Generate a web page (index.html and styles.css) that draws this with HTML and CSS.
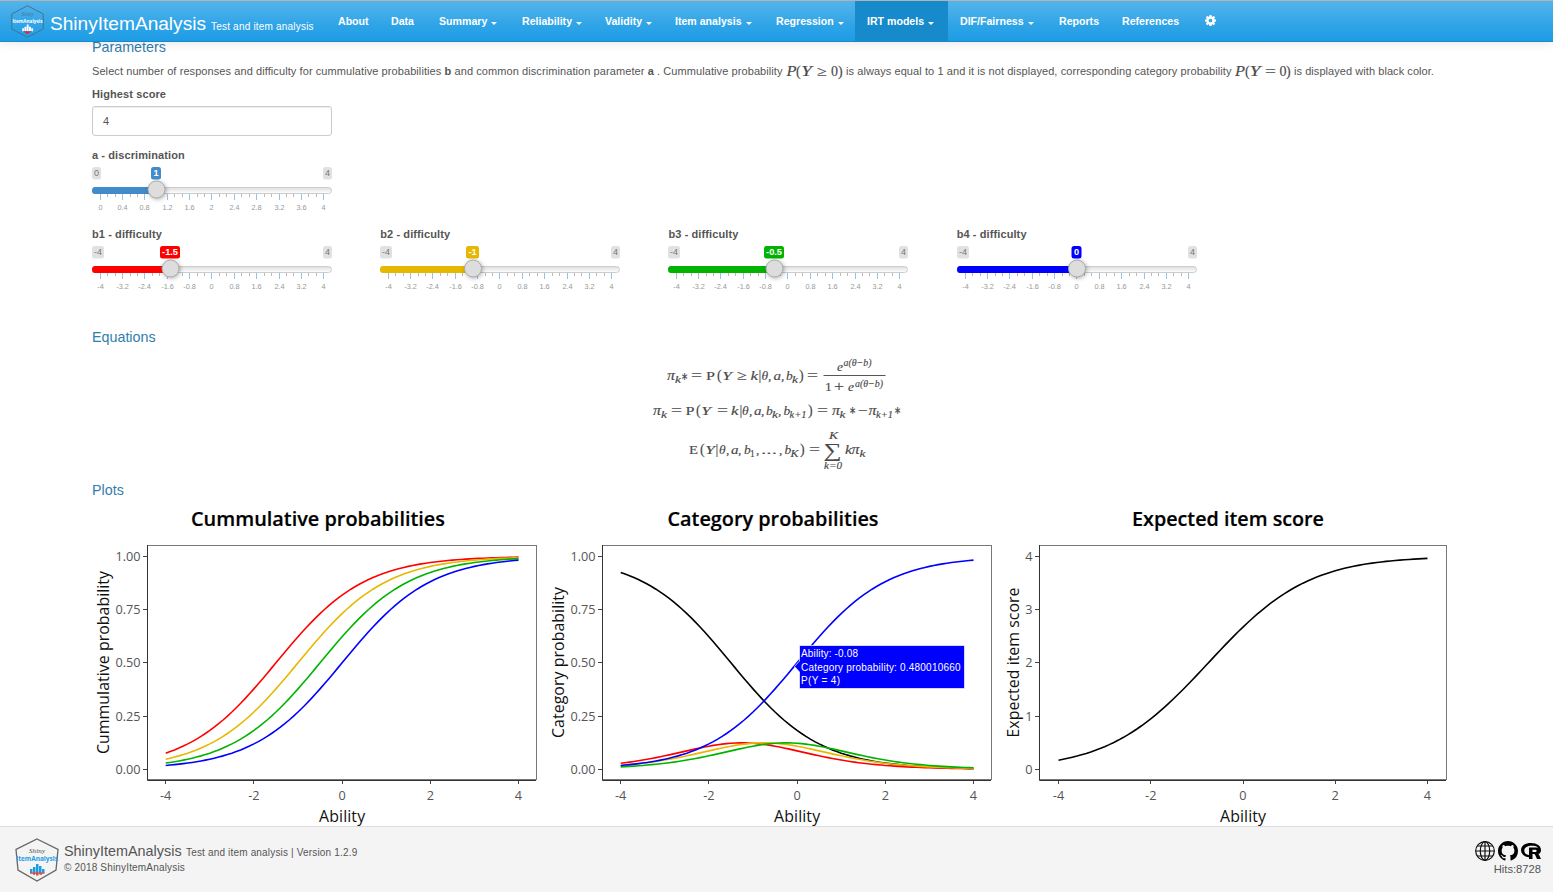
FILE: index.html
```html
<!DOCTYPE html>
<html lang="en">
<head>
<meta charset="utf-8">
<title>ShinyItemAnalysis</title>
<link rel="stylesheet" href="styles.css">
</head>
<body>
<header class="navbar">
  <svg class="nav-logo" viewBox="0 0 44 44"><path class="hex hex-dark" d="M22 1L43 12V32L22 43L1 32V12Z"/><text class="script white" x="14" y="15" textLength="16">Shiny</text><text class="brandword white" x="2" y="23.500" textLength="40" lengthAdjust="spacingAndGlyphs">ItemAnalysis</text><path fill="#fff" d="M15 31h2.500v4H15zM18 29h2.500v6H18zM21 26h2.500v9H21zM24 29h2.500v6H24zM27 31h2.500v4H27z"/><path fill="#c8334a" d="M16 35h12l-6 4z"/></svg>
  <div class="brand">ShinyItemAnalysis</div><div class="tagline">Test and item analysis</div>
  <nav class="menu">
    <a>About</a><a>Data</a><a class="drop">Summary</a><a class="drop">Reliability</a><a class="drop">Validity</a><a class="drop">Item analysis</a><a class="drop">Regression</a><a class="drop active">IRT models</a><a class="drop">DIF/Fairness</a><a>Reports</a><a>References</a>
    <a><svg class="gear" viewBox="0 0 16 16"><path fill="#fff" fill-rule="evenodd" d="M6.600 0h2.800l.4 2.200 1.200.5 1.800-1.300 2 2-1.300 1.800.5 1.200 2 .3v2.800l-2 .4-.5 1.200 1.300 1.800-2 2-1.800-1.300-1.200.5-.4 2H6.600l-.4-2-1.200-.5-1.800 1.300-2-2 1.300-1.800L2 9.900l-2-.4V6.700l2-.3.5-1.200L1.200 3.400l2-2L5 2.700l1.200-.5zM8 5.300a2.700 2.700 0 100 5.400 2.700 2.700 0 000-5.400z"/></svg></a>
  </nav>
</header>
<main class="content">
  <h4 class="h-params">Parameters</h4>
  <p class="intro"><span class="seg s1">Select number of responses and difficulty for cummulative probabilities <b>b</b> and common discrimination parameter <b>a</b> . Cummulative probability</span><svg class="imath m1" viewBox="786 61 60 18"><g data-math="i1"></g></svg><span class="seg s2">is always equal to 1 and it is not displayed, corresponding category probability</span><svg class="imath m2" viewBox="1235 61 59 18"><g data-math="i2"></g></svg><span class="seg s3">is displayed with black color.</span></p>
  <label class="label">Highest score</label>
  <div class="input">4</div>
  <section class="a-row"><div class="slider" data-label="a - discrimination" data-min="0" data-max="4" data-value="1" data-color="#428bca" data-pos="64.5"></div></section>
  <section class="b-row">
    <div class="slider" data-label="b1 - difficulty" data-min="-4" data-max="4" data-value="-1.5" data-color="#ff0000" data-pos="78.5"></div>
    <div class="slider" data-label="b2 - difficulty" data-min="-4" data-max="4" data-value="-1" data-color="#e6b800" data-pos="93"></div>
    <div class="slider" data-label="b3 - difficulty" data-min="-4" data-max="4" data-value="-0.5" data-color="#00b300" data-pos="106.5"></div>
    <div class="slider" data-label="b4 - difficulty" data-min="-4" data-max="4" data-value="0" data-color="#0000ff" data-pos="120"></div>
  </section>
  <h4 class="h-eq">Equations</h4>
  <svg class="equations" viewBox="640 350 280 130"><g data-math="display"></g><path class="rule" d="M823.500 375.500H885.500"/></svg>
  <h4 class="h-plots">Plots</h4>
  <section class="plots">
    <svg class="plot" id="cumulative" viewBox="92 503 455 323"></svg>
    <svg class="plot" id="category" viewBox="547 503 455 323"></svg>
    <svg class="plot" id="expected" viewBox="1002 503 455 323"></svg>
  </section>
</main>
<footer class="footer">
  <svg class="foot-logo" viewBox="0 0 44 44"><path class="hex" d="M22 1L43 11.500L41 32L22 43L3 32L1 11.500Z"/><text class="script" x="14" y="15" textLength="16">Shiny</text><text class="brandword" x="1" y="23" textLength="42" lengthAdjust="spacingAndGlyphs">ItemAnalysis</text><path fill="#1d9ce5" d="M15 31h2.500v4H15zM18 29h2.500v6H18zM21 26h2.500v9H21zM24 28h2.500v7H24zM27 31h2.500v4H27z"/><path fill="#e04a3a" d="M15 34.500h14.500v1.200H27v1h-2.500v-1h-1v1.800H21v-1.800h-1v1h-2v-1h-3z"/></svg>
  <div class="foot-text"><div><span class="foot-name">ShinyItemAnalysis</span><span class="foot-tag">Test and item analysis | Version 1.2.9</span></div><div class="copy">© 2018 ShinyItemAnalysis</div></div>
  <div class="foot-right">
    <div class="icons">
      <svg viewBox="0 0 20 20"><g fill="none" stroke="#111" stroke-width="1.200"><circle cx="10" cy="10" r="9.300"/><ellipse cx="10" cy="10" rx="4.700" ry="9.300"/><path d="M10 .7V19.300M.7 10H19.300M2.500 5H17.500M2.500 15H17.500"/></g></svg>
      <svg viewBox="0 0 16 16"><path d="M8 0C3.580 0 0 3.580 0 8c0 3.540 2.290 6.530 5.470 7.590.4.07.55-.17.55-.38 0-.19-.01-.82-.01-1.490-2.010.37-2.530-.49-2.690-.94-.09-.23-.48-.94-.82-1.130-.28-.15-.68-.52-.01-.53.63-.01 1.080.58 1.230.82.72 1.210 1.870.87 2.330.66.07-.52.28-.87.51-1.070-1.780-.2-3.640-.89-3.640-3.950 0-.87.31-1.590.82-2.150-.08-.2-.36-1.020.08-2.120 0 0 .67-.21 2.200.82.64-.18 1.320-.27 2-.27.68 0 1.360.09 2 .27 1.530-1.040 2.200-.82 2.200-.82.44 1.100.16 1.920.08 2.120.51.56.82 1.270.82 2.150 0 3.070-1.870 3.750-3.650 3.950.29.25.54.73.54 1.480 0 1.070-.01 1.930-.01 2.200 0 .21.15.46.55.38A8.013 8.013 0 0016 8c0-4.420-3.580-8-8-8z"/></svg>
      <svg viewBox="0 0 20 20"><path fill-rule="evenodd" d="M10 2C4 2 0 5 0 9s3.500 7 8 7.300V14C5 13.600 3.300 12 3.300 9.400 3.300 6.500 6.500 4.700 11 4.700s6.500 1.500 6.500 4c0 1.500-.5 2.500-1.500 3.300l2 1c1.300-1 2-2.300 2-4 0-4-4-7-10-7z"/><path fill-rule="evenodd" d="M8 6.500h7c2.500 0 4 1 4 3 0 1.500-.8 2.500-2.200 2.900 1 .4 1.500 1.600 3.200 5.600h-4l-1.800-4c-.3-.8-.8-1-1.600-1H11.500v5H8zM11.500 8.700v2.300h2.600c1 0 1.500-.4 1.500-1.200s-.5-1.100-1.500-1.100z"/></svg>
    </div>
    <div class="hits">Hits:8728</div>
  </div>
</footer>
<script src="app.js"></script>
</body>
</html>
```

FILE: styles.css
```css
* { box-sizing: border-box; }
body { margin: 0; height: 892px; overflow: hidden; background: #fff; color: #555; font-family: "Liberation Sans", Arial, sans-serif; font-size: 11px; display: flex; flex-direction: column; }
.navbar { height: 42px; flex: none; display: flex; align-items: flex-start; border-top: 1px solid #b3b3b3; border-bottom: 1px solid #178acc; background: linear-gradient(#54b4eb, #2fa4e7 60%, #1d9ce5); box-shadow: 0 1px 10px rgba(0,0,0,.1); color: #fff; z-index: 2; }
.nav-logo { width: 33px; height: 33px; margin: 4px 0 0 11px; flex: none; overflow: visible; }
.hex { fill: none; stroke: #666; stroke-width: 1.3; }
.hex-dark { stroke: #41738f; }
.script { font: italic 7px "Liberation Serif", serif; fill: #444; }
.brandword { font: bold 7px "Open Sans", sans-serif; fill: #1d9ce5; }
.white { fill: #fff; }
.script.white { fill: #41738f; }
.brand { margin-left: 6px; width: 161px; font-size: 19.1px; line-height: 45px; white-space: nowrap; }
.tagline { width: 115px; font-size: 10px; letter-spacing: .2px; line-height: 51px; white-space: nowrap; }
.menu { display: grid; grid-template-columns: 53px 48px 83px 83px 70px 101px 91px 93px 99px 63px 82px 36px; height: 40px; }
.menu a { padding-left: 12px; font-weight: bold; font-size: 10.6px; line-height: 40px; white-space: nowrap; }
.drop::after { content: ""; display: inline-block; margin-left: 4px; border: 3.5px solid transparent; border-top: 3px solid #fff; border-bottom: 0; }
.menu .active { background: #178acc; }
.gear { width: 11px; height: 11px; margin-left: 1px; vertical-align: -1px; }
.content { flex: 1; min-height: 0; padding-left: 92px; display: flex; flex-direction: column; align-items: flex-start; }
h4 { margin: 0; font-weight: normal; font-size: 14.3px; line-height: 16px; color: #317eac; flex: none; }
.h-params { margin-top: -3px; }
.intro { margin: 7px 0 0; height: 18px; line-height: 18px; display: flex; white-space: nowrap; flex: none; }
.s1 { width: 694px; letter-spacing: .084px; }
.s2 { width: 389px; letter-spacing: .08px; }
.s3 { width: 142px; letter-spacing: .06px; }
.imath { height: 18px; flex: none; }
.m1 { width: 60px; }
.m2 { width: 59px; }
.label { font-weight: bold; font-size: 11px; letter-spacing: .1px; line-height: 14px; margin-top: 7px; flex: none; }
.input { width: 240px; height: 30px; margin-top: 5px; padding-left: 10px; border: 1px solid #ccc; border-radius: 3px; line-height: 29px; box-shadow: inset 0 1px 1px rgba(0,0,0,.075); flex: none; }
.a-row { margin-top: 12px; height: 79px; flex: none; }
.b-row { display: flex; gap: 48.22px; height: 102px; flex: none; }
.slider { width: 240px; flex: none; }
.slider-label { font-weight: bold; letter-spacing: .1px; line-height: 14px; display: block; }
.slider svg { display: block; width: 240px; height: 52px; margin-top: 4px; overflow: visible; }
.tag { font-size: 9px; text-anchor: middle; fill: #777; }
.value { fill: #fff; font-weight: bold; font-size: 9.2px; }
.grid-text { font-size: 7.3px; text-anchor: middle; fill: #999; }
.handle { fill: #ddd; stroke: #aaa; filter: drop-shadow(1px 1px 2px rgba(0,0,0,.3)); }
.equations { width: 280px; height: 130px; margin: 5px 0 0 548px; flex: none; }
.math { font-family: "Liberation Serif", serif; fill: #4a4a4a; stroke: #4a4a4a; stroke-width: .15; }
.it { font-style: italic; }
.rule { stroke: #555; }
.h-plots { margin-top: 2px; }
.plots { display: flex; margin-top: 5px; height: 323px; flex: none; }
.plot { width: 455px; height: 323px; flex: none; font-family: "Open Sans", sans-serif; }
.title { font-size: 19px; font-weight: 600; fill: #000; stroke: #000; stroke-width: .2; }
.axis { font-size: 15.9px; fill: #111; text-anchor: middle; }
.tick { font-size: 12.7px; fill: #555; }
.curve { fill: none; stroke-width: 1.6; }
.tip { font: 10px "Liberation Sans", Arial, sans-serif; fill: #fff; }
.footer { height: 66px; flex: none; background: #f4f4f4; border-top: 1px solid #ddd; display: flex; padding: 0 12px 0 15px; z-index: 2; }
.foot-logo { width: 44px; height: 44px; margin-top: 11px; overflow: visible; }
.foot-text { margin: 16px 0 0 5px; line-height: 17px; white-space: nowrap; }
.foot-name { display: inline-block; width: 122px; font-size: 14.4px; }
.foot-tag, .copy { font-size: 10px; letter-spacing: .17px; }
.copy { line-height: 13px; }
.foot-right { margin: 14px 0 0 auto; text-align: right; }
.icons { display: flex; gap: 3px; height: 20px; }
.icons svg { width: 20px; height: 20px; }
.hits { font-size: 11.2px; line-height: 17px; }
```

FILE: app.js
```javascript
const NS = 'http://www.w3.org/2000/svg';
function add(parent, name, attrs, text) {
  const n = document.createElementNS(NS, name);
  for (const k in attrs) n.setAttribute(k, attrs[k]);
  if (text !== undefined) n.textContent = text;
  parent.appendChild(n);
  return n;
}

// Each entry: text, x, baseline, size, upright, optional width
const equations = {
  display: [
    ['π',667,379.5,14,0,8],['k',675,382.5,10.5,0,6],['∗',680.5,379.5,11,1,7],['=',691,379.5,14,1,11],['P',706,379.5,13.5,1,9],['(',717,379.5,14,1],['Y',722,379.5,13.5,0,10],['≥',737,379.5,14,1,10],['k',750.5,379.5,13.5,0,7.5],['|',758.5,379.5,14,1],['θ',761.5,379.5,13.5],[',',768,379.5,13.5,1],['a',773.5,379.5,13.5,0,7.5],[',',781,379.5,13.5,1],['b',786,379.5,13.5],['k',792,382.5,10.5,0,6],[')',799,379.5,14,1],['=',807,379.5,14,1,11],
    ['e',837,371,13.5],['a(θ−b)',843.5,366,10,0,28],['1',825,390.5,13.5,1],['+',834,390.5,14,1,10],['e',848,390.5,13.5],['a(θ−b)',855,387,10,0,28],
    ['π',653,414.5,14,0,8],['k',661,417.5,10.5,0,6],['=',671,414.5,14,1,11],['P',685.5,414.5,13.5,1,9],['(',696,414.5,14,1],['Y',701,414.5,13.5,0,10],['=',717,414.5,14,1,11],['k',731,414.5,13.5,0,7.5],['|',739.5,414.5,14,1],['θ',742,414.5,13.5],[',',749,414.5,13.5,1],['a',754,414.5,13.5,0,7.5],[',',761,414.5,13.5,1],['b',766,414.5,13.5],['k',772,417.5,10.5,0,6],[',',778,414.5,13.5,1],['b',783.5,414.5,13.5],['k+1',789.5,417.5,10,0,17],[')',808,414.5,14,1],['=',817,414.5,14,1,11],['π',832,414.5,14,0,8],['k',839.5,417.5,10.5,0,6],['∗',848.5,414,11,1,7],['−',858,414.5,14,1,10],['π',868.5,414.5,14,0,8],['k+1',876,417.5,10,0,17],['∗',893.5,414,11,1,7],
    ['E',689,454,13.5,1,9],['(',700,454,14,1],['Y',705,454,13.5,0,10],['|',715.5,454,14,1],['θ',719,454,13.5],[',',726,454,13.5,1],['a',731,454,13.5,0,7.5],[',',738,454,13.5,1],['b',744,454,13.5],['1',750,456.5,9.5,1],[',',756,454,13.5,1],['...',761,454,13.5,1,16],[',',779,454,13.5,1],['b',784.5,454,13.5],['K',790.5,456.5,9.5,0,8],[')',800,454,14,1],['=',809,454,14,1,11],['K',829,439,10,0,9],['∑',823.5,457,20,1,18],['k=0',824,469,10,0,18],['k',845,454,13.5,0,7],['π',851.5,454,14,0,8],['k',859.5,457,10.5,0,6]
  ],
  i1: [['P',786.5,75,14,0,10],['(',796,75,14,1],['Y',801,75,14,0,11],['≥',817,75,14,1,10],['0',831,75,14,1],[')',838,75,14,1]],
  i2: [['P',1235,75,14,0,10],['(',1245,75,14,1],['Y',1249.5,75,14,0,11],['=',1265,75,14,1,11],['0',1279.5,75,14,1],[')',1286,75,14,1]]
};
document.querySelectorAll('[data-math]').forEach(g => {
  equations[g.dataset.math].forEach(([s, x, y, size, up, w]) => {
    const a = { x, y, 'font-size': size, class: up ? 'math' : 'math it' };
    if (w) { a.textLength = w; a.lengthAdjust = 'spacingAndGlyphs'; }
    add(g, 'text', a, s);
  });
});

document.querySelectorAll('.slider').forEach((el, i) => {
  const { label, min, max, value, color, pos } = el.dataset;
  const p = +pos, lo = +min, hi = +max;
  const l = document.createElement('span');
  l.className = 'slider-label';
  l.textContent = label;
  el.appendChild(l);
  const s = add(el, 'svg', { viewBox: '0 0 240 52' });
  const gid = 'track' + i;
  const gr = add(s, 'linearGradient', { id: gid, x1: 0, y1: 0, x2: 0, y2: 1 });
  add(gr, 'stop', { offset: 0, 'stop-color': '#ddd' });
  add(gr, 'stop', { offset: 1, 'stop-color': '#fff' });
  const tag = (cx, w, t, fill, cls) => {
    add(s, 'rect', { x: cx - w / 2, y: 1, width: w, height: 12.5, rx: 2.5, fill });
    add(s, 'text', { x: cx, y: 10.3, class: cls }, t);
  };
  tag(lo < 0 ? 6 : 4.5, lo < 0 ? 12 : 9, min, '#e1e1e1', 'tag');
  tag(235.5, 9, max, '#e1e1e1', 'tag');
  tag(p - 0.5, { 1: 10, 2: 13, 4: 20 }[value.length], value, color, 'tag value');
  add(s, 'rect', { x: .5, y: 21.5, width: 239, height: 6, rx: 3, fill: `url(#${gid})`, stroke: '#ccc' });
  add(s, 'path', { d: `M3 21H${p}V28H3Q0 28 0 24.500Q0 21 3 21Z`, fill: color });
  for (let k = 0; k <= 30; k++) {
    const x = Math.floor(8.2 + k * 7.45) + .5, major = k % 3 === 0;
    add(s, 'path', { d: `M${x} 28V${major ? 34 : 31}`, stroke: major ? '#99c2e0' : '#bbb' });
    if (major) add(s, 'text', { x, y: 44, class: 'grid-text' }, +(lo + (hi - lo) * k / 30).toFixed(1));
  }
  add(s, 'circle', { cx: p, cy: 23.5, r: 8.5, class: 'handle' });
});

const sig = z => 1 / (1 + Math.exp(-z));
const red = '#ff0000', gold = '#e6b800', green = '#00b300', blue = '#0000ff';
function plot(id, o) {
  const s = document.getElementById(id);
  add(s, 'text', { x: o.title[1], y: 526, class: 'title', textLength: o.title[2], lengthAdjust: 'spacingAndGlyphs' }, o.title[0]);
  const X = t => o.x0 + (t + 4) / 8 * (o.x1 - o.x0), Y = v => 769.3 - v * 213;
  add(s, 'rect', { x: o.left + .5, y: 545.5, width: o.width, height: 234, fill: 'none', stroke: '#777' });
  add(s, 'path', { d: `M${o.left + .5} 545V780.500H${o.left + o.width}`, fill: 'none', stroke: '#333' });
  o.labels.forEach((t, i) => {
    const y = Y(i / 4);
    add(s, 'path', { d: `M${o.left - 4} ${Math.floor(y) + .5}H${o.left}`, stroke: '#444' });
    add(s, 'text', { x: o.left - 6.5, y: y + 4.5, 'text-anchor': 'end', class: 'tick' }, t);
  });
  [-4, -2, 0, 2, 4].forEach(t => {
    add(s, 'path', { d: `M${Math.floor(X(t)) + .5} 781V784`, stroke: '#444' });
    add(s, 'text', { x: X(t), y: 800, 'text-anchor': 'middle', class: 'tick' }, t);
  });
  add(s, 'text', { x: X(0), y: 822, class: 'axis', textLength: 46 }, 'Ability');
  add(s, 'text', { x: 0, y: 0, class: 'axis', textLength: o.ylab[2], transform: `translate(${o.ylab[1]} 662.500) rotate(-90)` }, o.ylab[0]);
  o.curves.forEach(([c, f]) => {
    let d = '';
    for (let t = -4; t <= 4.001; t += .1) d += (d ? 'L' : 'M') + X(t).toFixed(2) + ' ' + Y(f(t)).toFixed(2);
    add(s, 'path', { d, class: 'curve', stroke: c });
  });
  return s;
}
const probs = ['0.00', '0.25', '0.50', '0.75', '1.00'];
plot('cumulative', { title: ['Cummulative probabilities', 191, 254], left: 147, width: 389, x0: 165.7, x1: 518.5, labels: probs, ylab: ['Cummulative probability', 109, 183], curves: [[red, t => sig(t + 1.5)], [gold, t => sig(t + 1)], [green, t => sig(t + .5)], [blue, sig]] });
const cat = plot('category', { title: ['Category probabilities', 667.5, 211], left: 602, width: 389, x0: 620.7, x1: 973.5, labels: probs, ylab: ['Category probability', 564, 151], curves: [['#000', t => 1 - sig(t + 1.5)], [red, t => sig(t + 1.5) - sig(t + 1)], [gold, t => sig(t + 1) - sig(t + .5)], [green, t => sig(t + .5) - sig(t)], [blue, sig]] });
plot('expected', { title: ['Expected item score', 1132, 192], left: 1039, width: 407, x0: 1058.5, x1: 1427.5, labels: ['0', '1', '2', '3', '4'], ylab: ['Expected item score', 1019, 150], curves: [['#000', t => (sig(t + 1.5) + sig(t + 1) + sig(t + .5) + sig(t)) / 4]] });

// Hover label on the P(Y = 4) curve
add(cat, 'path', { d: 'M794.500 666.500L799.500 661V645.500H964.500V688.500H799.500V672Z', fill: blue, stroke: '#fff', 'stroke-width': .7 });
[['Ability: -0.08', 657, 57], ['Category probability: 0.480010660', 670.5, 159.5], ['P(Y = 4)', 684, 39]].forEach(([t, y, w]) => add(cat, 'text', { x: 801, y, class: 'tip', textLength: w }, t));
```
